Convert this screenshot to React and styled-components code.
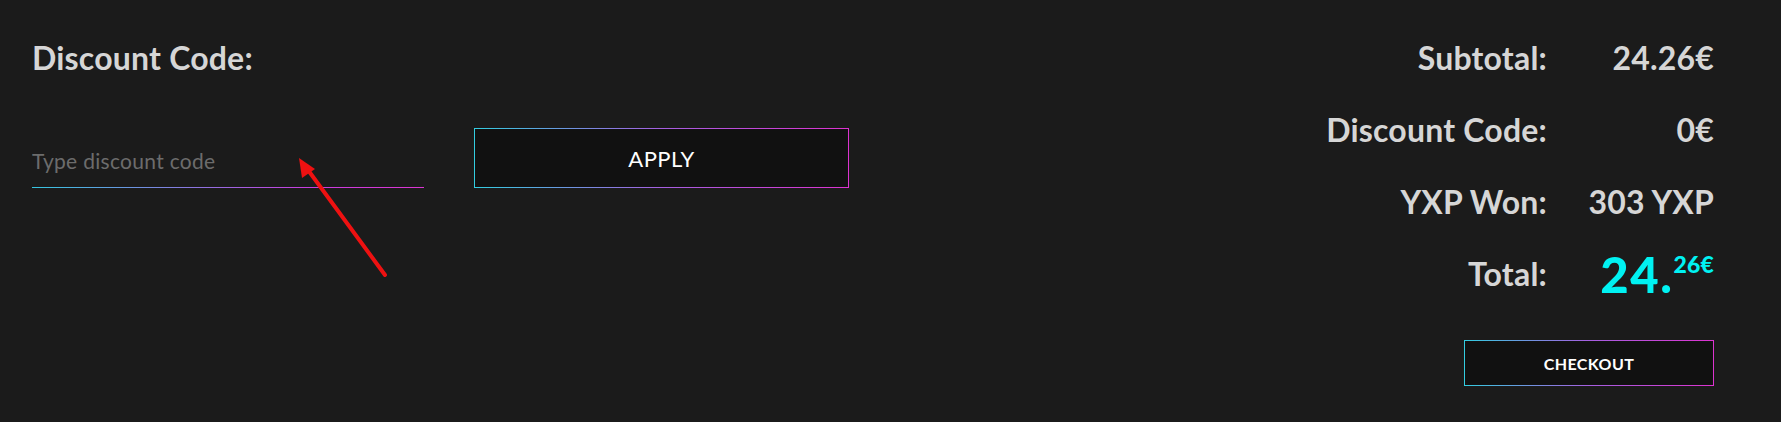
import styled, { createGlobalStyle } from 'styled-components'

const GlobalStyle = createGlobalStyle`
  html, body {
    margin: 0;
    padding: 0;
    background: #1b1b1b;
  }
  body {
    font-family: Lato, "Noto Sans", sans-serif;
  }
`

const Page = styled.div`
  position: relative;
  width: 1781px;
  height: 422px;
  box-sizing: border-box;
  display: flex;
  justify-content: space-between;
  padding: 0 67px 0 32px;
  background: #1b1b1b;
  color: #d6d6d6;
`

const Left = styled.div`
  display: flex;
  flex-direction: column;
  padding-top: 40px;
`

const Heading = styled.h2`
  margin: 0;
  font-size: 32px;
  font-weight: 700;
  line-height: 36px;
  letter-spacing: 0.2px;
`

const CodeRow = styled.div`
  display: flex;
  align-items: flex-end;
  gap: 50px;
  margin-top: 52px;
`

const InputWrap = styled.div`
  width: 392px;
  border-bottom: 1px solid;
  border-image: linear-gradient(to right, #35c6e0, #c93ee0 70%, #dc36d2) 1;
  padding-bottom: 14px;
`

const Input = styled.input`
  width: 100%;
  background: transparent;
  border: none;
  outline: none;
  padding: 0;
  font-family: inherit;
  font-size: 21px;
  letter-spacing: 0.3px;
  color: #d6d6d6;
  &::placeholder {
    color: #6c6c6c;
  }
`

const GradientButton = styled.button`
  width: ${p => p.$w}px;
  height: ${p => p.$h}px;
  box-sizing: border-box;
  background: #111111;
  border: 1px solid;
  border-image: linear-gradient(to right, #33cde0, #a65fe0 50%, #dd33d0) 1;
  color: #ffffff;
  font-family: inherit;
  font-size: ${p => p.$fs}px;
  font-weight: ${p => p.$fw};
  letter-spacing: 0.4px;
  cursor: pointer;
`

const Right = styled.div`
  display: flex;
  flex-direction: column;
  align-items: flex-end;
  padding-top: 40px;
`

const Summary = styled.div`
  display: grid;
  grid-template-columns: auto 167px;
  row-gap: 36px;
  font-size: 32px;
  font-weight: 700;
  line-height: 36px;
  letter-spacing: 0.2px;
  text-align: right;
`

const Label = styled.div``

const Value = styled.div`
  color: ${p => (p.$accent ? '#00f2f2' : '#d6d6d6')};
`

const Big = styled.span`
  font-size: 49px;
  font-weight: 900;
  line-height: 36px;
  letter-spacing: 1.5px;
`

const Sup = styled.sup`
  font-size: 23px;
  font-weight: 900;
  vertical-align: 20px;
  line-height: 0;
`

const Checkout = styled.div`
  margin-top: 41px;
`

const Annotation = styled.svg`
  position: absolute;
  left: 0;
  top: 0;
  pointer-events: none;
`

export default function App() {
  return (
    <>
      <GlobalStyle />
      <Page>
        <Left>
          <Heading>Discount Code:</Heading>
          <CodeRow>
            <InputWrap>
              <Input placeholder="Type discount code" />
            </InputWrap>
            <GradientButton $w={375} $h={60} $fs={22} $fw={400}>APPLY</GradientButton>
          </CodeRow>
        </Left>
        <Right>
          <Summary>
            <Label>Subtotal:</Label>
            <Value>24.26€</Value>
            <Label>Discount Code:</Label>
            <Value>0€</Value>
            <Label>YXP Won:</Label>
            <Value>303 YXP</Value>
            <Label>Total:</Label>
            <Value $accent>
              <Big>24.</Big>
              <Sup>26€</Sup>
            </Value>
          </Summary>
          <Checkout>
            <GradientButton $w={250} $h={46} $fs={16} $fw={700}>CHECKOUT</GradientButton>
          </Checkout>
        </Right>
        <Annotation width="1781" height="422">
          <line x1="385" y1="275" x2="308" y2="170" stroke="#ee1111" strokeWidth="4" strokeLinecap="round" />
          <polygon points="299,158 302,178 315,169" fill="#ee1111" />
        </Annotation>
      </Page>
    </>
  )
}
